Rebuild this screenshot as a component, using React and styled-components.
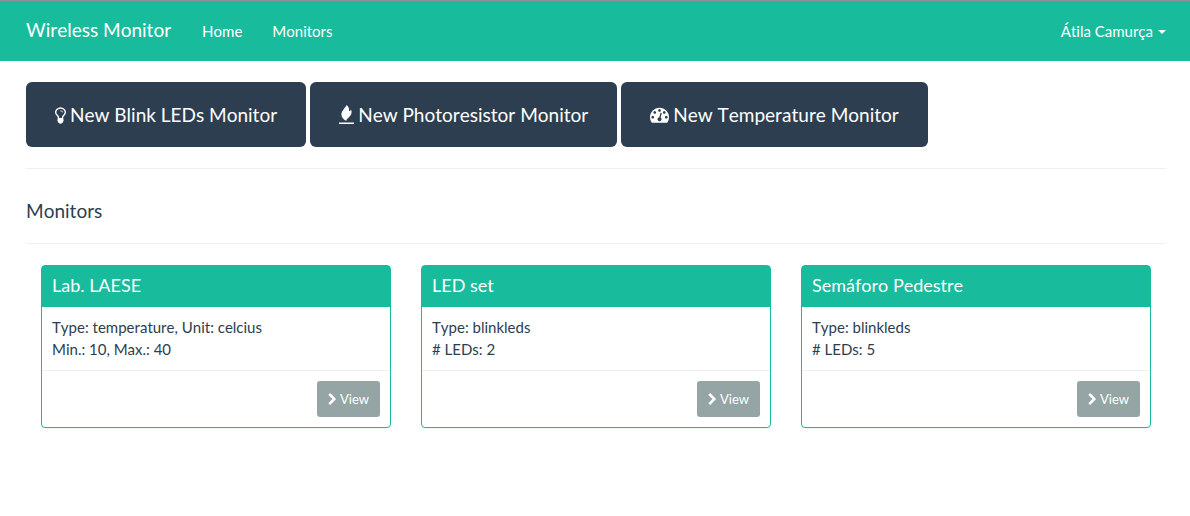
import React from "react";
import styled, { createGlobalStyle } from "styled-components";

const teal = "#18bc9c";
const navy = "#2c3e50";

const GlobalStyle = createGlobalStyle`
  * { box-sizing: border-box; }
  body {
    margin: 0;
    background: #fff;
    color: ${navy};
    font-family: Lato, "Liberation Sans", sans-serif;
    font-size: 15px;
    line-height: 22px;
    font-kerning: none;
    font-variant-ligatures: none;
  }
`;

const Navbar = styled.nav`
  display: flex;
  align-items: center;
  min-height: 61px;
  padding: 0 24px 0 26px;
  border-top: 1px solid #909090;
  background: ${teal};
`;

const Brand = styled.a`
  margin-right: 31px;
  padding-bottom: 2px;
  color: #fff;
  font-size: 19px;
  text-decoration: none;
`;

const NavLinks = styled.div`
  display: flex;
  flex: 1;
  gap: 30px;
`;

const NavLink = styled.a`
  color: #fff;
  text-decoration: none;
`;

const UserMenu = styled.button`
  display: flex;
  align-items: center;
  gap: 5px;
  padding: 0;
  border: 0;
  background: none;
  color: #fff;
  font: inherit;
  font-kerning: none;
  cursor: pointer;
`;

const Caret = styled.span`
  margin-top: 2px;
  border-top: 4px solid #fff;
  border-right: 4px solid transparent;
  border-left: 4px solid transparent;
`;

const Page = styled.main`
  padding: 21px 24px 21px 26px;
`;

const Actions = styled.div`
  display: flex;
  flex-wrap: wrap;
  gap: 4px;
`;

const ActionButton = styled.button`
  display: flex;
  align-items: center;
  gap: 4px;
  padding: 19px 29px;
  border: 0;
  border-radius: 6px;
  background: ${navy};
  color: #fff;
  font: inherit;
  font-size: 19px;
  line-height: 27px;
  cursor: pointer;
`;

const Icon = styled.svg`
  display: block;
  flex: none;
  fill: currentColor;
`;

const Divider = styled.hr`
  margin: 21px 0;
  border: 0;
  border-top: 1px solid #ecf0f1;
`;

const Heading = styled.h4`
  margin: 31px 0 22px;
  font-size: 19px;
  font-weight: 400;
  line-height: 21px;
`;

const CardGrid = styled.div`
  display: grid;
  grid-template-columns: repeat(3, minmax(0, 1fr));
  gap: 30px;
  padding: 0 15px;
`;

const Card = styled.section`
  border: 1px solid ${teal};
  border-radius: 4px;
  box-shadow: 0 1px 1px rgba(0, 0, 0, 0.05);
`;

const CardTitle = styled.h3`
  margin: 0;
  padding: 9px 10px 11px;
  background: ${teal};
  color: #fff;
  font-size: 18px;
  font-weight: 400;
  line-height: 21px;
`;

const CardBody = styled.div`
  padding: 9px 10px 10px;
`;

const CardFooter = styled.div`
  display: flex;
  justify-content: flex-end;
  padding: 10px;
  border-top: 1px solid #ecf0f1;
`;

const ViewButton = styled.button`
  display: flex;
  align-items: center;
  gap: 3px;
  padding: 8px 11px;
  border: 0;
  border-radius: 3px;
  background: #95a5a6;
  color: #fff;
  font: inherit;
  font-size: 13px;
  line-height: 20px;
  cursor: pointer;
`;

const BulbIcon = () => (
  <Icon width="11" height="18" viewBox="384 0 1024 1676" aria-hidden="true">
    <path d="M1120 576q0 13-9.5 22.5t-22.5 9.5-22.5-9.5-9.5-22.5q0-46-54-71t-106-25q-13 0-22.5-9.5t-9.5-22.5 9.5-22.5 22.5-9.5q50 0 99.5 16t87 54 37.5 90zm160 0q0-72-34.5-134t-90-101.5-123-62-136.5-22.5-136.5 22.5-123 62-90 101.5-34.5 134q0 101 68 180 10 11 30.5 33t30.5 33q128 153 141 298h228q13-145 141-298 10-11 30.5-33t30.5-33q68-79 68-180zm128 0q0 155-103 268-45 49-74.5 87t-59.5 95.5-34 107.5q47 28 47 82 0 37-25 64 25 27 25 64 0 52-45 81 13 23 13 47 0 46-31.5 71t-77.5 25q-20 44-60 70t-87 26-87-26-60-70q-46 0-77.5-25t-31.5-71q0-24 13-47-45-29-45-81 0-37 25-64-25-27-25-64 0-54 47-82-4-50-34-107.5t-59.5-95.5-74.5-87q-103-113-103-268 0-99 44.5-184.5t117-142 164-89 186.5-32.5 186.5 32.5 164 89 117 142 44.5 184.5z" />
  </Icon>
);

const FlameIcon = () => (
  <Icon width="15" height="19" viewBox="0 0 15 19" aria-hidden="true">
    <path d="M7.6 0C6.8 2.6 2.4 5.4 2.4 9.6C2.4 12.6 4.6 14.6 7.4 15.9C7.2 15 7.6 14.2 8.8 13.2C10.8 11.6 12.6 9.8 12.6 7C12.6 6 12.4 5.2 11.8 4.4C11.6 5.4 11 6 10 6.2C10.4 3.6 9.6 1.4 7.6 0Z" />
    <path d="M0 17.5H15V19H0Z" />
  </Icon>
);

const GaugeIcon = () => (
  <Icon width="19" height="19" viewBox="0 0 1792 1792" aria-hidden="true">
    <path
      fillRule="evenodd"
      d="M384 1152q0-53-37.5-90.5t-90.5-37.5-90.5 37.5-37.5 90.5 37.5 90.5 90.5 37.5 90.5-37.5 37.5-90.5zm192-448q0-53-37.5-90.5t-90.5-37.5-90.5 37.5-37.5 90.5 37.5 90.5 90.5 37.5 90.5-37.5 37.5-90.5zm428 481l101-382q6-26-7.5-48.5t-38.5-29.5-48 6.5-30 39.5l-101 382q-60 5-107 43.5t-63 98.5q-20 77 20 146t117 89 146-20 89-117q16-60-6-117t-72-91zm660-33q0-53-37.5-90.5t-90.5-37.5-90.5 37.5-37.5 90.5 37.5 90.5 90.5 37.5 90.5-37.5 37.5-90.5zm-640-640q0-53-37.5-90.5t-90.5-37.5-90.5 37.5-37.5 90.5 37.5 90.5 90.5 37.5 90.5-37.5 37.5-90.5zm448 192q0-53-37.5-90.5t-90.5-37.5-90.5 37.5-37.5 90.5 37.5 90.5 90.5 37.5 90.5-37.5 37.5-90.5zm320 448q0 261-141 483-19 29-54 29h-1402q-35 0-54-29-141-221-141-483 0-182 71-348t191-286 286-191 348-71 348 71 286 191 191 286 71 348z"
    />
  </Icon>
);

const ChevronIcon = () => (
  <Icon width="9" height="13" viewBox="280 0 1241 1792" aria-hidden="true">
    <path d="M1363 877l-742 742q-19 19-45 19t-45-19l-166-166q-19-19-19-45t19-45l531-531-531-531q-19-19-19-45t19-45l166-166q19-19 45-19t45 19l742 742q19 19 19 45t-19 45z" />
  </Icon>
);

const actions = [
  { label: "New Blink LEDs Monitor", Glyph: BulbIcon },
  { label: "New Photoresistor Monitor", Glyph: FlameIcon },
  { label: "New Temperature Monitor", Glyph: GaugeIcon },
];

const monitors = [
  { name: "Lab. LAESE", lines: ["Type: temperature, Unit: celcius", "Min.: 10, Max.: 40"] },
  { name: "LED set", lines: ["Type: blinkleds", "# LEDs: 2"] },
  { name: "Semáforo Pedestre", lines: ["Type: blinkleds", "# LEDs: 5"] },
];

export default function App() {
  return (
    <>
      <GlobalStyle />
      <Navbar>
        <Brand href="#">Wireless Monitor</Brand>
        <NavLinks>
          <NavLink href="#home">Home</NavLink>
          <NavLink href="#monitors">Monitors</NavLink>
        </NavLinks>
        <UserMenu type="button" aria-haspopup="true">
          Átila Camurça
          <Caret />
        </UserMenu>
      </Navbar>
      <Page>
        <Actions>
          {actions.map(({ label, Glyph }) => (
            <ActionButton key={label} type="button">
              <Glyph />
              {label}
            </ActionButton>
          ))}
        </Actions>
        <Divider />
        <Heading id="monitors">Monitors</Heading>
        <Divider />
        <CardGrid>
          {monitors.map(({ name, lines }) => (
            <Card key={name}>
              <CardTitle>{name}</CardTitle>
              <CardBody>
                {lines.map((line) => (
                  <div key={line}>{line}</div>
                ))}
              </CardBody>
              <CardFooter>
                <ViewButton type="button">
                  <ChevronIcon />
                  View
                </ViewButton>
              </CardFooter>
            </Card>
          ))}
        </CardGrid>
      </Page>
    </>
  );
}
